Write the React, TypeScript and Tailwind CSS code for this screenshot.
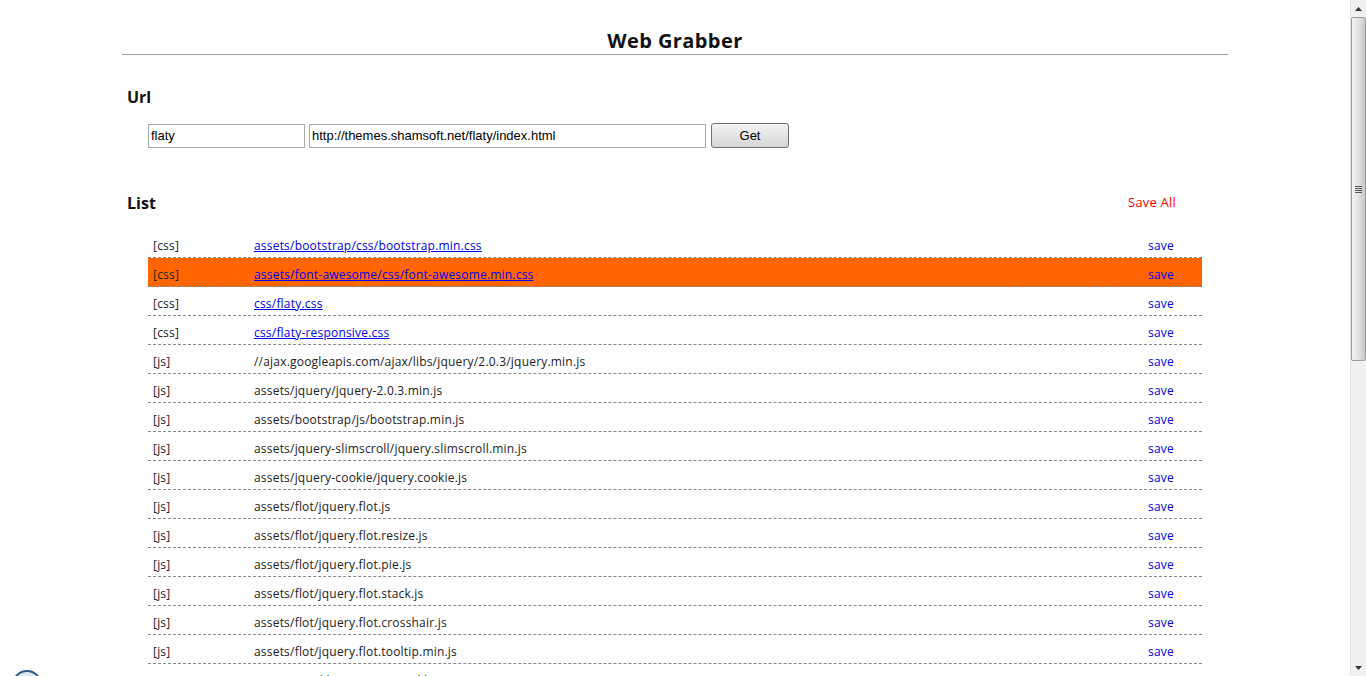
const files: { type: string; path: string; link?: boolean }[] = [
  { type: "css", path: "assets/bootstrap/css/bootstrap.min.css", link: true },
  { type: "css", path: "assets/font-awesome/css/font-awesome.min.css", link: true },
  { type: "css", path: "css/flaty.css", link: true },
  { type: "css", path: "css/flaty-responsive.css", link: true },
  { type: "js", path: "//ajax.googleapis.com/ajax/libs/jquery/2.0.3/jquery.min.js" },
  { type: "js", path: "assets/jquery/jquery-2.0.3.min.js" },
  { type: "js", path: "assets/bootstrap/js/bootstrap.min.js" },
  { type: "js", path: "assets/jquery-slimscroll/jquery.slimscroll.min.js" },
  { type: "js", path: "assets/jquery-cookie/jquery.cookie.js" },
  { type: "js", path: "assets/flot/jquery.flot.js" },
  { type: "js", path: "assets/flot/jquery.flot.resize.js" },
  { type: "js", path: "assets/flot/jquery.flot.pie.js" },
  { type: "js", path: "assets/flot/jquery.flot.stack.js" },
  { type: "js", path: "assets/flot/jquery.flot.crosshair.js" },
  { type: "js", path: "assets/flot/jquery.flot.tooltip.min.js" },
  { type: "js", path: "assets/sparkline/jquery.sparkline.min.js" },
  { type: "js", path: "js/flaty.js" },
];

function Scrollbar() {
  return (
    <div className="w-[16px] h-full bg-[#f0f0f0] border-l border-[#e4e4e4] flex flex-col items-center shrink-0">
      <div className="h-[17px] flex items-center justify-center">
        <svg width="7" height="4" viewBox="0 0 7 4">
          <path d="M3.5 0 L7 4 L0 4 Z" fill="#333" />
        </svg>
      </div>
      <div className="w-[15px] h-[344px] rounded-[2px] border border-[#9a9a9a] bg-gradient-to-r from-[#f4f4f4] via-[#e2e2e2] to-[#c8c8c8] flex items-center justify-center">
        <div className="flex flex-col gap-[1px]">
          <div className="w-[7px] h-[1px] bg-[#555]" />
          <div className="w-[7px] h-[1px] bg-[#555]" />
          <div className="w-[7px] h-[1px] bg-[#555]" />
          <div className="w-[7px] h-[1px] bg-[#555]" />
        </div>
      </div>
      <div className="flex-1" />
      <div className="h-[17px] flex items-center justify-center">
        <svg width="7" height="4" viewBox="0 0 7 4">
          <path d="M0 0 L7 0 L3.5 4 Z" fill="#333" />
        </svg>
      </div>
    </div>
  );
}

export default function App() {
  return (
    <div className="h-[676px] w-full overflow-hidden flex bg-white relative">
      <div className="flex-1 min-w-0 overflow-hidden">
        <div className="w-[1106px] mx-auto font-['Open_Sans',sans-serif] text-[#111]">
          <h1 className="pt-[28px] text-center text-[20px] font-bold leading-[26px] border-b border-[#a0a0a0] tracking-[0.4px]">
            Web Grabber
          </h1>

          <h2 className="mt-[31px] pl-[5px] text-[16px] font-bold leading-[22px]">Url</h2>
          <div className="mt-[15px] pl-[26px] flex items-center font-['Liberation_Sans',Arial,sans-serif] text-[13px]">
            <input
              defaultValue="flaty"
              className="w-[157px] h-[24px] border border-[#a9a9a9] px-[2px] outline-none text-[#000]"
            />
            <input
              defaultValue="http://themes.shamsoft.net/flaty/index.html"
              className="ml-[4px] w-[397px] h-[24px] border border-[#a9a9a9] px-[2px] outline-none text-[#000]"
            />
            <button className="ml-[5px] w-[78px] h-[25px] border border-[#707070] rounded-[3px] bg-gradient-to-b from-[#f2f2f2] to-[#d6d6d6] text-[#000]">
              Get
            </button>
          </div>

          <div className="mt-[44px] pl-[5px] pr-[52px] flex items-center justify-between">
            <h2 className="text-[16px] font-bold leading-[22px]">List</h2>
            <a className="text-[13px] text-[#ff0000] cursor-pointer tracking-[0.2px]">Save All</a>
          </div>

          <div className="mt-[15px] mx-[26px] text-[12px] tracking-[0.2px]">
            {files.map((f, i) => (
              <div
                key={i}
                className={`h-[29px] pt-[5px] flex items-center border-b border-dashed border-[#888] ${
                  i === 1 ? "bg-[#ff6600]" : ""
                }`}
              >
                <span className="w-[106px] pl-[5px] text-[#222]">[{f.type}]</span>
                {f.link ? (
                  <a className="flex-1 text-[#0000ee] underline cursor-pointer">{f.path}</a>
                ) : (
                  <span className="flex-1 text-[#222]">{f.path}</span>
                )}
                <a className="pr-[28px] text-[#0000ee] cursor-pointer">save</a>
              </div>
            ))}
          </div>
        </div>
      </div>
      <div className="absolute left-[12px] top-[670px] w-[30px] h-[30px] rounded-full border-2 border-[#2b5d8a] bg-[#dfe9f3]" />
      <Scrollbar />
    </div>
  );
}
